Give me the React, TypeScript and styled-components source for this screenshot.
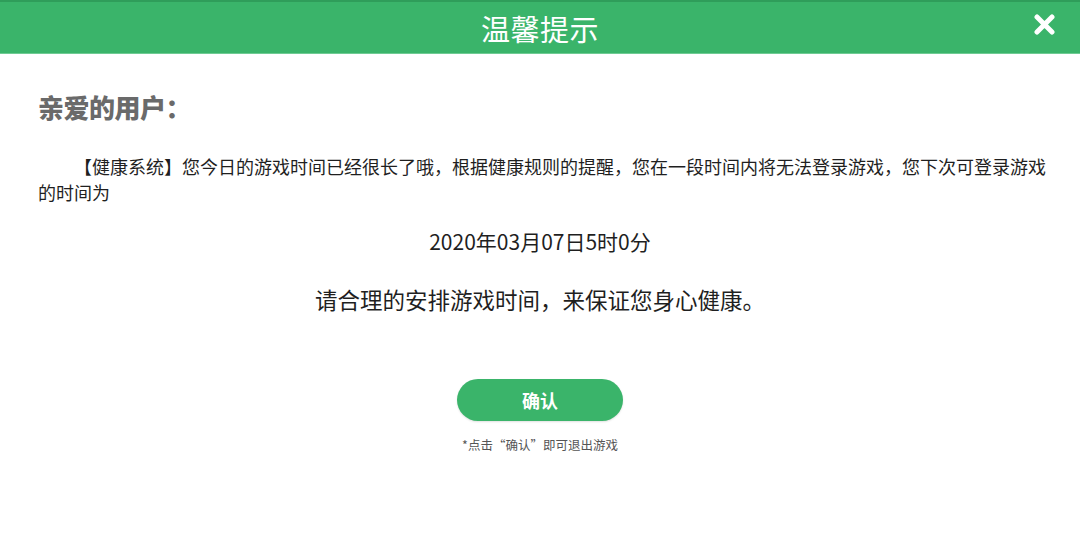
import React from "react";
import styled, { createGlobalStyle } from "styled-components";

const GlobalStyle = createGlobalStyle`
  html, body {
    margin: 0;
    padding: 0;
    background: #ffffff;
  }
  body {
    font-family: "Noto Sans CJK SC", "Noto Sans", sans-serif;
    color: #1f1f1f;
  }
`;

const Page = styled.div`
  width: 1080px;
  height: 540px;
  background: #ffffff;
  overflow: hidden;
`;

const Header = styled.header`
  box-sizing: border-box;
  height: 54px;
  background: #3ab46a;
  border-top: 2px solid #2f9d5a;
  border-bottom: 1px solid #6fcb93;
  display: grid;
  grid-template-columns: 1fr auto 1fr;
  align-items: center;
  padding: 0 24px;
`;

const Title = styled.h1`
  grid-column: 2;
  margin: 0;
  font-size: 29px;
  font-weight: 400;
  line-height: 36px;
  color: #ffffff;
  letter-spacing: 0.5px;
`;

const CloseButton = styled.button`
  grid-column: 3;
  justify-self: end;
  width: 24px;
  height: 24px;
  padding: 0;
  border: none;
  background: transparent;
  display: flex;
  align-items: center;
  justify-content: center;
  cursor: pointer;
  margin-top: -6px;
`;

const Content = styled.main`
  padding: 0 38px;
`;

const Greeting = styled.h2`
  margin: 36px 0 0;
  font-size: 26px;
  line-height: 34px;
  font-weight: 900;
  color: #6a6a6a;
  letter-spacing: -0.5px;
`;

const Paragraph = styled.p`
  margin: 29px -8px 0 0;
  font-size: 18px;
  line-height: 26px;
  text-indent: 2em;
  color: #1f1f1f;
`;

const CenterLine = styled.p<{ $size: number; $gap: number }>`
  margin: ${(p) => p.$gap}px 0 0;
  text-align: center;
  font-size: ${(p) => p.$size}px;
  line-height: 30px;
  color: #1f1f1f;
`;

const Actions = styled.div`
  margin-top: 65px;
  display: flex;
  flex-direction: column;
  align-items: center;
`;

const ConfirmButton = styled.button`
  width: 166px;
  height: 42px;
  border: none;
  border-radius: 21px;
  background: #3ab46a;
  color: #ffffff;
  font-family: "Noto Sans CJK SC", sans-serif;
  font-size: 18px;
  font-weight: 700;
  line-height: 42px;
  padding: 0 0 2px;
  cursor: pointer;
  box-shadow: 0 1px 2px rgba(0, 0, 0, 0.12);
`;

const Note = styled.div`
  margin-top: 15px;
  font-size: 12.5px;
  line-height: 18px;
  color: #555555;
`;

export default function App() {
  return (
    <Page>
      <GlobalStyle />
      <Header>
        <Title>温馨提示</Title>
        <CloseButton aria-label="关闭">
          <svg width="21" height="21" viewBox="0 0 21 21">
            <path
              d="M3 3 L18 18 M18 3 L3 18"
              stroke="#ffffff"
              strokeWidth="5"
              strokeLinecap="round"
              fill="none"
            />
          </svg>
        </CloseButton>
      </Header>
      <Content>
        <Greeting>亲爱的用户：</Greeting>
        <Paragraph>
          【健康系统】您今日的游戏时间已经很长了哦，根据健康规则的提醒，您在一段时间内将无法登录游戏，您下次可登录游戏的时间为
        </Paragraph>
        <CenterLine $size={21} $gap={21}>
          2020年03月07日5时0分
        </CenterLine>
        <CenterLine $size={22.5} $gap={28}>
          请合理的安排游戏时间，来保证您身心健康。
        </CenterLine>
        <Actions>
          <ConfirmButton>确认</ConfirmButton>
          <Note>*点击“确认”即可退出游戏</Note>
        </Actions>
      </Content>
    </Page>
  );
}
